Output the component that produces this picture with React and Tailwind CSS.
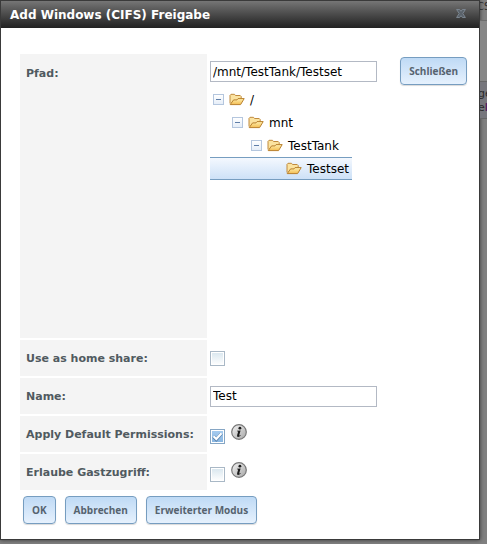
import React from "react";

const FolderIcon = () => (
  <svg viewBox="0 0 16 13" className="w-4 h-[13px] shrink-0" aria-hidden="true">
    <defs>
      <linearGradient id="folder" x1="0" y1="0" x2="0" y2="1">
        <stop offset="0" stopColor="#fff0b0" />
        <stop offset="1" stopColor="#f3bd52" />
      </linearGradient>
    </defs>
    <path
      d="M1 10.5V2.3L2 1.3H5.5L6.5 2.5H11.2L12.2 3.5V6"
      fill="#fbe3a0"
      stroke="#c08a3e"
    />
    <path
      d="M1.2 11.6L4.6 6.9H8L9 5.6H15.2L11.6 11.6Z"
      fill="url(#folder)"
      stroke="#b9802e"
      strokeLinejoin="round"
    />
  </svg>
);

const InfoIcon = () => (
  <svg viewBox="0 0 16 16" className="w-4 h-4" aria-hidden="true">
    <defs>
      <linearGradient id="info" x1="0" y1="0" x2="1" y2="1">
        <stop offset="0" stopColor="#f4f4f4" />
        <stop offset="1" stopColor="#a6a6a6" />
      </linearGradient>
    </defs>
    <circle cx="8" cy="8" r="7.3" fill="url(#info)" stroke="#777" strokeWidth="1.2" />
    <circle cx="8.9" cy="4.2" r="1.4" fill="#1c1c1c" />
    <path
      d="M6 6.8L9.6 6.4L8.2 11.3Q8.1 12 9.6 10.9L9.9 11.3Q8.4 13 7 12.9Q5.7 12.7 6.1 11.2L7.1 7.7Q7.2 7.2 6 7.3Z"
      fill="#1c1c1c"
    />
  </svg>
);

const CloseIcon = () => (
  <svg viewBox="0 0 10 9" className="w-[10px] h-[9px]" aria-hidden="true">
    <path
      d="M.6 .5H3.6L5 2.3L6.4 .5H9.4L6.8 4.5L9.4 8.5H6.4L5 6.7L3.6 8.5H.6L3.2 4.5Z"
      fill="#5a626a"
      stroke="#7f8a95"
      strokeWidth=".9"
    />
  </svg>
);

const Expander = () => (
  <button
    type="button"
    aria-label="Collapse"
    className="w-[11px] h-[11px] shrink-0 border border-[#b4c6de] bg-linear-to-b from-white to-[#e6eef8] flex items-center justify-center"
  >
    <span className="w-[5px] h-px bg-[#5f7ea8]" />
  </button>
);

const Button = ({ children }) => (
  <button
    type="button"
    className="h-7 px-2 rounded-[4px] border border-[#769dc0] bg-linear-to-b from-[#bfdaf5] to-[#e6f1fd] shadow-[0_1px_1px_rgba(0,0,0,0.15)] font-['Open_Sans',sans-serif] text-[10px] leading-4 font-bold text-[#56636f] whitespace-nowrap"
  >
    {children}
  </button>
);

const TextBox = ({ id, value }) => (
  <input
    id={id}
    type="text"
    defaultValue={value}
    className="block w-[167px] h-[21px] px-[2px] border border-[#b3b9c4] bg-white text-[12px] text-black outline-none"
  />
);

const CheckBox = ({ id, checked }) => (
  <span className="relative block w-[15px] h-[15px]">
    <input
      id={id}
      type="checkbox"
      defaultChecked={checked}
      className="peer block appearance-none w-[15px] h-[15px] border border-[#a9b8c6] bg-white bg-clip-content p-px bg-linear-to-b from-[#d8e6ee] to-white checked:from-[#a8cdf0] checked:to-[#86b4e0] checked:border-[#86a6c4]"
    />
    <svg
      viewBox="0 0 15 15"
      className="absolute inset-0 hidden peer-checked:block pointer-events-none"
      aria-hidden="true"
    >
      <path d="M3.5 7.5L6.3 10.5L11.5 4.5" fill="none" stroke="#5c86b0" strokeWidth="3.4" />
      <path d="M3.5 7.2L6.3 10L11.5 4.2" fill="none" stroke="#fff" strokeWidth="2.2" />
    </svg>
  </span>
);

const TreeRow = ({ label, indent, leaf, selected }) => (
  <li
    className={`h-[23px] flex items-center gap-[5px] border-y text-[12px] leading-4 text-black ${indent} ${
      selected
        ? "border-[#769dc0] bg-linear-to-b from-[#f4f8fe] to-[#cde1f7]"
        : "border-transparent"
    }`}
  >
    {!leaf && <Expander />}
    <FolderIcon />
    <span>{label}</span>
  </li>
);

const Field = ({ id, label, children }) => (
  <tr>
    <th
      scope="row"
      className="w-[187px] h-9 px-[6px] pt-[2px] bg-[#f4f4f4] text-left align-middle text-[11px] leading-4 font-bold text-[#505a60] whitespace-nowrap"
    >
      <label htmlFor={id}>{label}</label>
    </th>
    <td className="px-px align-middle">{children}</td>
  </tr>
);

const App = () => {
  return (
    <div className="min-h-screen flex bg-[#808080] font-['DejaVu_Sans',Verdana,sans-serif]">
      <div
        role="dialog"
        aria-labelledby="dialog-title"
        className="flex-1 min-w-0 self-start border border-[#3a3a3a] bg-white shadow-[0_0_4px_rgba(0,0,0,0.6)]"
      >
        <div className="h-[27px] pl-[9px] pr-[13px] flex items-center justify-between bg-linear-to-b from-[#767676] to-[#222222]">
          <h1 id="dialog-title" className="text-[12px] leading-4 font-bold text-white">
            Add Windows (CIFS) Freigabe
          </h1>
          <button type="button" aria-label="Close" className="pb-[3px]">
            <CloseIcon />
          </button>
        </div>

        <form className="pl-[17px] pr-2 pt-6 pb-[15px]">
          <table className="w-full border-separate border-spacing-[2px]">
            <tbody>
              <tr>
                <th
                  scope="row"
                  className="w-[187px] h-[284px] px-[6px] pt-3 bg-[#f4f4f4] text-left align-top text-[11px] leading-4 font-bold text-[#505a60]"
                >
                  <label htmlFor="path">Pfad:</label>
                </th>
                <td className="px-px pt-[3px] align-top">
                  <div className="flex items-start justify-between pr-px">
                    <div className="pt-1">
                      <TextBox id="path" value="/mnt/TestTank/Testset" />
                      <ul className="w-[142px] mt-[6px]">
                        <TreeRow label="/" indent="pl-[3px]" />
                        <TreeRow label="mnt" indent="pl-[22px]" />
                        <TreeRow label="TestTank" indent="pl-[41px]" />
                        <TreeRow label="Testset" indent="pl-[76px]" leaf selected />
                      </ul>
                    </div>
                    <Button>Schließen</Button>
                  </div>
                </td>
              </tr>
              <Field id="home" label="Use as home share:">
                <CheckBox id="home" />
              </Field>
              <Field id="name" label="Name:">
                <TextBox id="name" value="Test" />
              </Field>
              <Field id="permissions" label="Apply Default Permissions:">
                <div className="flex items-start gap-[6px]">
                  <div className="pt-[5px]">
                    <CheckBox id="permissions" checked />
                  </div>
                  <InfoIcon />
                </div>
              </Field>
              <Field id="guest" label="Erlaube Gastzugriff:">
                <div className="flex items-start gap-[6px]">
                  <div className="pt-[5px]">
                    <CheckBox id="guest" />
                  </div>
                  <InfoIcon />
                </div>
              </Field>
            </tbody>
          </table>
          <div className="flex gap-[9px] pl-[5px] pt-1">
            <Button>OK</Button>
            <Button>Abbrechen</Button>
            <Button>Erweiterter Modus</Button>
          </div>
        </form>
      </div>

      {/* dimmed page behind the dialog */}
      <div
        aria-hidden="true"
        className="w-[7px] shrink-0 overflow-hidden text-[11px] leading-[14px] text-[#2a2a2a] whitespace-nowrap"
      >
        <div className="h-[21px] border-b border-[#6c6c6c] text-[10px] -indent-[3px]">CS</div>
        <div className="h-[60px] bg-[#868686]" />
        <div className="h-[38px] pt-[5px] border-y border-[#666666] bg-[#76767c] -indent-[2px]">
          <div>ge</div>
          <div>
            e<span className="text-[#4b0050]">l</span>
          </div>
        </div>
      </div>
    </div>
  );
};

export default App;
